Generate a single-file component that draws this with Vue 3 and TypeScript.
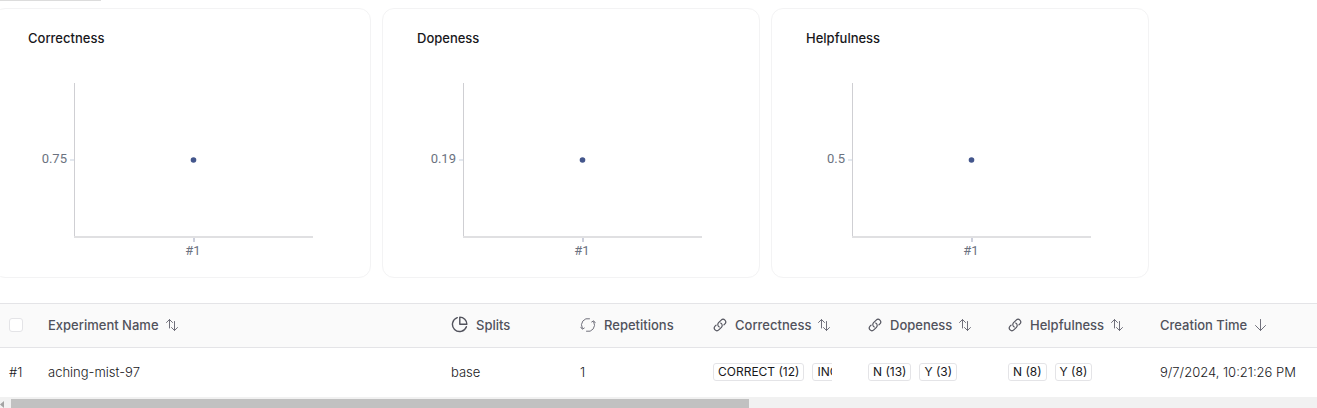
<script setup lang="ts">
interface Chart {
  title: string
  value: string
}

interface Column {
  key: string
  label: string
  icon?: 'pie' | 'cycle' | 'link'
  sort?: 'both' | 'down'
}

const charts: Chart[] = [
  { title: 'Correctness', value: '0.75' },
  { title: 'Dopeness', value: '0.19' },
  { title: 'Helpfulness', value: '0.5' },
]

const columns: Column[] = [
  { key: 'name', label: 'Experiment Name', sort: 'both' },
  { key: 'splits', label: 'Splits', icon: 'pie' },
  { key: 'repetitions', label: 'Repetitions', icon: 'cycle' },
  { key: 'correctness', label: 'Correctness', icon: 'link', sort: 'both' },
  { key: 'dopeness', label: 'Dopeness', icon: 'link', sort: 'both' },
  { key: 'helpfulness', label: 'Helpfulness', icon: 'link', sort: 'both' },
  { key: 'created', label: 'Creation Time', sort: 'down' },
]

const feedback: string[][] = [
  ['CORRECT (12)', 'INC'],
  ['N (13)', 'Y (3)'],
  ['N (8)', 'Y (8)'],
]
</script>

<template>
  <main class="page">
    <div class="tab-edge"></div>
    <section class="charts">
      <article v-for="chart in charts" :key="chart.title" class="card">
        <h2>{{ chart.title }}</h2>
        <svg class="plot" viewBox="0 0 376 224" role="img" :aria-label="chart.title">
          <path class="axis-y" d="M80.500 29V184" />
          <path class="axis-x" d="M80 183H319" />
          <path class="tick-y" d="M76 106H80" />
          <path class="tick-x" d="M200 184V188" />
          <circle cx="199.500" cy="106" r="2.800" />
          <text x="73" y="109" text-anchor="end">{{ chart.value }}</text>
          <text x="199" y="201" text-anchor="middle">#1</text>
        </svg>
      </article>
    </section>

    <table>
      <colgroup>
        <col class="w-check" />
        <col class="w-name" />
        <col class="w-splits" />
        <col class="w-repetitions" />
        <col class="w-correctness" />
        <col class="w-dopeness" />
        <col class="w-helpfulness" />
        <col class="w-created" />
      </colgroup>
      <thead>
        <tr>
          <th class="check" scope="col"><input type="checkbox" aria-label="Select all experiments" /></th>
          <th v-for="col in columns" :key="col.key" scope="col">
            <div class="head">
              <svg v-if="col.icon === 'pie'" class="icon pie" viewBox="0 0 18 18">
                <path d="M6.600 1.700A7.600 7.600 0 1 0 16.300 11.400" />
                <path d="M9.300 1.200V8.700H16.800A7.500 7.500 0 0 0 9.300 1.200Z" />
              </svg>
              <svg v-else-if="col.icon === 'cycle'" class="icon cycle" viewBox="0 0 16 16">
                <path d="M9.500 1.700A6.500 6.500 0 0 0 2.300 11.200M.800 10.200L2.300 12.200L4.300 11" />
                <path d="M6.500 14.300A6.500 6.500 0 0 0 13.700 4.800M11.700 5L13.700 3.800L15.200 5.800" />
              </svg>
              <svg v-else-if="col.icon === 'link'" class="icon link" viewBox="0 0 24 24">
                <path d="M13.190 8.688a4.500 4.500 0 0 1 1.242 7.244l-4.500 4.500a4.500 4.500 0 0 1-6.364-6.364l1.757-1.757m13.350-.622 1.757-1.757a4.500 4.500 0 0 0-6.364-6.364l-4.500 4.500a4.500 4.500 0 0 0 1.242 7.244" />
              </svg>
              <div class="label">
                <span>{{ col.label }}</span>
                <button v-if="col.sort" type="button" :aria-label="'Sort by ' + col.label">
                  <svg v-if="col.sort === 'both'" class="icon" viewBox="0 0 14 14">
                    <path d="M4.500 10V1.500M1.500 4.500L4.500 1.500L7.500 4.500" />
                    <path d="M9.500 3.500V12.500M6.500 9.500L9.500 12.500L12.500 9.500" />
                  </svg>
                  <svg v-else class="icon" viewBox="0 0 14 14">
                    <path d="M7.500 1.500V12.500M2.500 7.500L7.500 12.500L12.500 7.500" />
                  </svg>
                </button>
              </div>
            </div>
          </th>
        </tr>
      </thead>
      <tbody>
        <tr>
          <td class="check">#1</td>
          <td>aching-mist-97</td>
          <td>base</td>
          <td>1</td>
          <td v-for="(tags, i) in feedback" :key="i">
            <div class="tags">
              <span v-for="tag in tags" :key="tag" class="tag">{{ tag }}</span>
            </div>
          </td>
          <td>9/7/2024, 10:21:26 PM</td>
        </tr>
      </tbody>
    </table>
    <div class="scrollbar">
      <svg class="arrow" viewBox="0 0 11 9"><path d="M4 2V9L0 5.500Z" /></svg>
      <div class="thumb"></div>
    </div>
  </main>
</template>

<style>
body {
  margin: 0;
  background: #fff;
  overflow: hidden;
}
</style>

<style scoped>
* {
  box-sizing: border-box;
}
.page {
  font-family: Inter, sans-serif;
  font-size: 13px;
  line-height: 20px;
  color: #18181b;
  overflow: hidden;
}
.tab-edge {
  width: 101px;
  height: 1px;
  background: #dcdcdc;
}
.charts {
  display: grid;
  grid-template-columns: repeat(3, 1fr);
  gap: 11px;
  margin: 7px 168px 25px -7px;
}
.card {
  border: 1px solid #f3f3f4;
  border-radius: 12px;
  padding-top: 19px;
}
h2 {
  margin: 0 0 0 34px;
  font-size: 13px;
  line-height: 20px;
  font-weight: 500;
  color: #18181b;
}
.plot {
  display: block;
  width: 100%;
  margin-top: 6px;
  margin-bottom: -1px;
}
.plot path {
  fill: none;
}
.axis-y {
  stroke: #cfcfd3;
}
.axis-x {
  stroke: #e0e0e2;
  stroke-width: 2;
}
.tick-y {
  stroke: #e3e8ef;
  stroke-width: 2;
}
.tick-x {
  stroke: #cdd0dc;
  stroke-width: 2;
}
.plot circle {
  fill: #43568c;
}
.plot text {
  font-family: Roboto, sans-serif;
  font-size: 13px;
  fill: #6b7280;
}
table {
  width: 100%;
  table-layout: fixed;
  border-collapse: separate;
  border-spacing: 0;
}
.w-check { width: 30px; }
.w-splits { width: 129px; }
.w-repetitions { width: 133px; }
.w-correctness { width: 155px; }
.w-dopeness { width: 140px; }
.w-helpfulness { width: 152px; }
.w-created { width: 175px; }
th,
td {
  padding: 0 18px;
  text-align: left;
  white-space: nowrap;
}
th {
  height: 45px;
  padding-bottom: 2px;
  border-top: 1px solid #e4e4e7;
  border-bottom: 1px solid #e4e4e7;
  background: #fafafa;
  color: #51525c;
  font-weight: 500;
}
td {
  height: 49px;
  padding-bottom: 1px;
  font-weight: 300;
}
.check {
  padding-left: 9px;
  padding-right: 0;
}
input {
  display: block;
  appearance: none;
  width: 14px;
  height: 14px;
  margin: 0;
  border: 1px solid #e4e4e7;
  border-radius: 3px;
  background: #fff;
}
.head {
  display: flex;
  align-items: center;
  gap: 8px;
}
.label {
  display: flex;
  align-items: center;
  gap: 6px;
}
button {
  display: flex;
  padding: 0;
  border: 0;
  background: none;
  color: inherit;
}
.icon {
  flex: none;
  width: 14px;
  height: 14px;
  fill: none;
  stroke: #70707b;
  stroke-linecap: round;
  stroke-linejoin: round;
}
.pie {
  width: 17px;
  height: 17px;
  stroke: #51525c;
  stroke-width: 1.5;
}
.cycle {
  width: 16px;
  height: 16px;
}
.link {
  stroke: #51525c;
  stroke-width: 2;
}
.tags {
  display: flex;
  gap: 8px;
  overflow: hidden;
}
.tag {
  flex: none;
  padding: 0 4px;
  border: 1px solid #e4e4e7;
  border-radius: 3px;
  font-size: 12px;
  line-height: 16px;
  font-weight: 400;
}
.scrollbar {
  display: flex;
  height: 11px;
  padding-top: 2px;
  background: #f1f1f1;
}
.arrow {
  flex: none;
  width: 11px;
  height: 9px;
  fill: #a3a3a3;
}
.thumb {
  width: 56%;
  background: #c1c1c1;
}
</style>
